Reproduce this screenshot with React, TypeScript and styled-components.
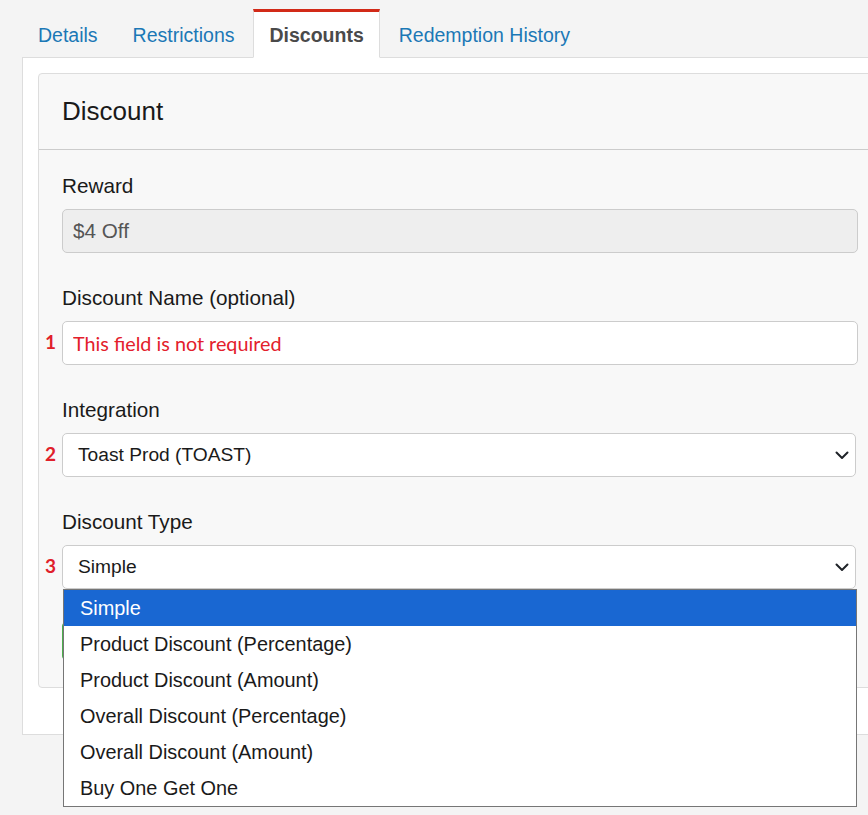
import React from "react";
import styled, { createGlobalStyle } from "styled-components";

const GlobalStyle = createGlobalStyle`
  html {
    overflow: hidden;
    min-height: 100%;
  }
  body {
    margin: 0;
    min-height: 815px;
    background: #f4f4f4;
    font-family: "Liberation Sans", Arial, sans-serif;
    color: #222;
  }
  * {
    box-sizing: border-box;
  }
`;

const Page = styled.div`
  padding: 9px 0 0 22px;
  width: 900px;
  min-height: 815px;
`;

const TabBar = styled.ul`
  display: flex;
  list-style: none;
  margin: 0 0 -1px 0;
  padding: 0;
  position: relative;
  z-index: 1;
`;

const Tab = styled.li<{ active?: boolean }>`
  margin-right: 3px;
  padding: 10px 15px 8px;
  line-height: 27px;
  font-size: 19.5px;
  border: 1px solid transparent;
  border-top: 3px solid ${p => (p.active ? "#d22a18" : "transparent")};
  border-left-color: ${p => (p.active ? "#ddd" : "transparent")};
  border-right-color: ${p => (p.active ? "#ddd" : "transparent")};
  border-bottom-color: ${p => (p.active ? "#fff" : "transparent")};
  background: ${p => (p.active ? "#fff" : "transparent")};
  color: ${p => (p.active ? "#4a4a4a" : "#1b78b6")};
  font-weight: ${p => (p.active ? 700 : 400)};
  cursor: pointer;
`;

const Panel = styled.div`
  background: #fff;
  border: 1px solid #ddd;
  padding: 15px 15px 46px;
  width: 876px;
`;

const Card = styled.div`
  background: #f8f8f8;
  border: 1px solid #ddd;
  border-radius: 4px;
`;

const CardHeader = styled.div`
  height: 76px;
  display: flex;
  align-items: center;
  padding: 0 23px;
  border-bottom: 1px solid #ccc;
  font-size: 26px;
  color: #1a1a1a;
`;

const CardBody = styled.div`
  padding: 21px 23px 27px;
`;

const FormGroup = styled.div<{ last?: boolean }>`
  position: relative;
  margin-bottom: ${p => (p.last ? "0" : "30px")};
`;

const Label = styled.label`
  display: block;
  font-size: 20.7px;
  line-height: 30px;
  margin-bottom: 8px;
  color: #1a1a1a;
`;

const Field = styled.div`
  position: relative;
`;

const Marker = styled.span`
  position: absolute;
  left: -17px;
  top: 50%;
  transform: translateY(-58%);
  font-family: Lato, "Open Sans", sans-serif;
  font-weight: 700;
  font-size: 19px;
  color: #e0202a;
`;

const TextInput = styled.input<{ tone?: "muted" | "alert" }>`
  display: block;
  width: 100%;
  height: 44px;
  border: 1px solid #ccc;
  border-radius: 5px;
  padding: 0 10px;
  font-family: ${p =>
    p.tone === "alert" ? 'Lato, "Open Sans", sans-serif' : '"Liberation Sans", Arial, sans-serif'};
  font-size: ${p => (p.tone === "alert" ? "19.8px" : "20.7px")};
  color: ${p => (p.tone === "alert" ? "#e3202b" : "#555")};
  background: ${p => (p.tone === "muted" ? "#eee" : "#fff")};
  outline: none;
`;

const SelectBox = styled.div`
  display: flex;
  align-items: center;
  justify-content: space-between;
  height: 44px;
  width: 794px;
  border: 1px solid #ccc;
  border-radius: 5px;
  background: #fff;
  padding: 0 6px 0 15px;
  font-size: 19.2px;
  color: #1a1a1a;
`;

const Chevron = () => (
  <svg width="14" height="9" viewBox="0 0 14 9" fill="none">
    <path d="M1.5 1.5 L7 7 L12.5 1.5" stroke="#1f2328" strokeWidth="2" strokeLinecap="round" strokeLinejoin="round" />
  </svg>
);

const OptionList = styled.ul`
  position: absolute;
  top: 100%;
  left: 1px;
  width: 794px;
  margin: 0;
  padding: 0;
  list-style: none;
  background: #fff;
  border: 1px solid #767676;
  z-index: 5;
`;

const Option = styled.li<{ selected?: boolean }>`
  height: 36px;
  line-height: 36px;
  padding-left: 16px;
  font-size: 19.9px;
  background: ${p => (p.selected ? "#1967d2" : "#fff")};
  color: ${p => (p.selected ? "#fff" : "#1a1a1a")};
`;

// green save button, mostly hidden behind the open option list
const SaveButton = styled.button`
  display: block;
  width: 160px;
  height: 38px;
  margin-top: 33px;
  border: 1px solid #4cae4c;
  border-radius: 4px;
  background: #5cb85c;
`;

const tabs = ["Details", "Restrictions", "Discounts", "Redemption History"];
const discountTypes = [
  "Simple",
  "Product Discount (Percentage)",
  "Product Discount (Amount)",
  "Overall Discount (Percentage)",
  "Overall Discount (Amount)",
  "Buy One Get One",
];

const App: React.FC = () => (
  <>
    <GlobalStyle />
    <Page>
      <TabBar>
        {tabs.map(t => (
          <Tab key={t} active={t === "Discounts"}>
            {t}
          </Tab>
        ))}
      </TabBar>
      <Panel>
        <Card>
          <CardHeader>Discount</CardHeader>
          <CardBody>
            <FormGroup>
              <Label>Reward</Label>
              <TextInput tone="muted" value="$4 Off" disabled readOnly />
            </FormGroup>

            <FormGroup>
              <Label>Discount Name (optional)</Label>
              <Field>
                <Marker>1</Marker>
                <TextInput tone="alert" value="This field is not required" readOnly />
              </Field>
            </FormGroup>

            <FormGroup>
              <Label>Integration</Label>
              <Field>
                <Marker>2</Marker>
                <SelectBox>
                  Toast Prod (TOAST)
                  <Chevron />
                </SelectBox>
              </Field>
            </FormGroup>

            <FormGroup last>
              <Label>Discount Type</Label>
              <Field>
                <Marker>3</Marker>
                <SelectBox>
                  Simple
                  <Chevron />
                </SelectBox>
                <OptionList>
                  {discountTypes.map((d, i) => (
                    <Option key={d} selected={i === 0}>
                      {d}
                    </Option>
                  ))}
                </OptionList>
              </Field>
            </FormGroup>

            <SaveButton aria-label="Save" />
          </CardBody>
        </Card>
      </Panel>
    </Page>
  </>
);

export default App;
